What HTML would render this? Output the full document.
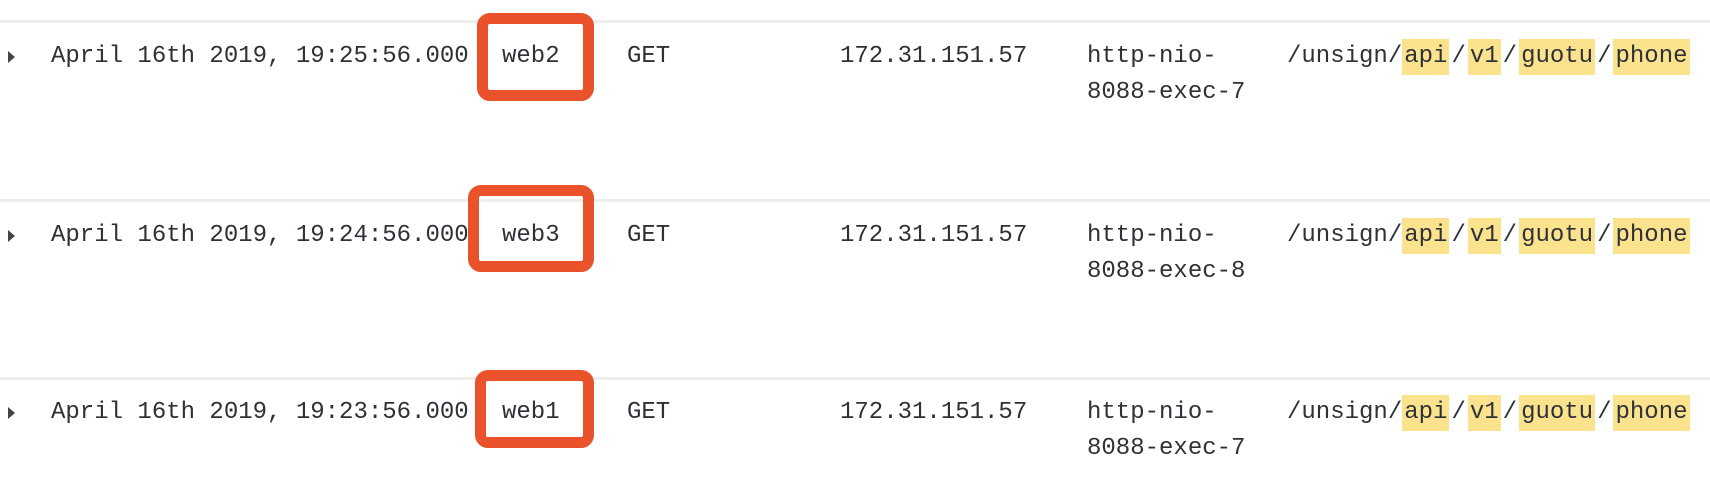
<!DOCTYPE html>
<html><head><meta charset="utf-8"><style>
body{margin:0;width:1710px;height:500px;background:#fff;position:relative;overflow:hidden;font-family:"Liberation Mono","DejaVu Sans Mono",monospace;font-size:24px;color:#2f3138}
.sep{position:absolute;left:0;width:1710px;height:3px;background:#eeeeee}
.t{position:absolute;white-space:pre;line-height:36px}
.arr{position:absolute;width:0;height:0;border-left:7px solid #444;border-top:6px solid transparent;border-bottom:6px solid transparent}
.box{position:absolute;border:11px solid #e9522a;border-radius:13px;box-sizing:border-box}
.h{background:#fbe38e;display:inline-block;padding:0 2px;line-height:36px}
.s{display:inline-block;padding:0 2px}
</style></head><body>
<div class="sep" style="top:20px"></div>
<div class="sep" style="top:199px"></div>
<div class="sep" style="top:377px"></div>

<div class="arr" style="left:8px;top:51px"></div>
<div class="t" style="left:51px;top:39px">April 16th 2019, 19:25:56.000</div>
<div class="t" style="left:502px;top:39px">web2</div>
<div class="t" style="left:627px;top:39px">GET</div>
<div class="t" style="left:840px;top:39px">172.31.151.57</div>
<div class="t" style="left:1087px;top:39px">http-nio-
8088-exec-7</div>
<div class="t" style="left:1287px;top:39px">/unsign/<span class="h">api</span><span class="s">/</span><span class="h">v1</span><span class="s">/</span><span class="h">guotu</span><span class="s">/</span><span class="h">phone</span></div>
<div class="box" style="left:477px;top:13px;width:117px;height:88px"></div>

<div class="arr" style="left:8px;top:230px"></div>
<div class="t" style="left:51px;top:218px">April 16th 2019, 19:24:56.000</div>
<div class="t" style="left:502px;top:218px">web3</div>
<div class="t" style="left:627px;top:218px">GET</div>
<div class="t" style="left:840px;top:218px">172.31.151.57</div>
<div class="t" style="left:1087px;top:218px">http-nio-
8088-exec-8</div>
<div class="t" style="left:1287px;top:218px">/unsign/<span class="h">api</span><span class="s">/</span><span class="h">v1</span><span class="s">/</span><span class="h">guotu</span><span class="s">/</span><span class="h">phone</span></div>
<div class="box" style="left:468px;top:185px;width:126px;height:87px"></div>

<div class="arr" style="left:8px;top:407px"></div>
<div class="t" style="left:51px;top:395px">April 16th 2019, 19:23:56.000</div>
<div class="t" style="left:502px;top:395px">web1</div>
<div class="t" style="left:627px;top:395px">GET</div>
<div class="t" style="left:840px;top:395px">172.31.151.57</div>
<div class="t" style="left:1087px;top:395px">http-nio-
8088-exec-7</div>
<div class="t" style="left:1287px;top:395px">/unsign/<span class="h">api</span><span class="s">/</span><span class="h">v1</span><span class="s">/</span><span class="h">guotu</span><span class="s">/</span><span class="h">phone</span></div>
<div class="box" style="left:475px;top:370px;width:119px;height:78px"></div>
</body></html>
